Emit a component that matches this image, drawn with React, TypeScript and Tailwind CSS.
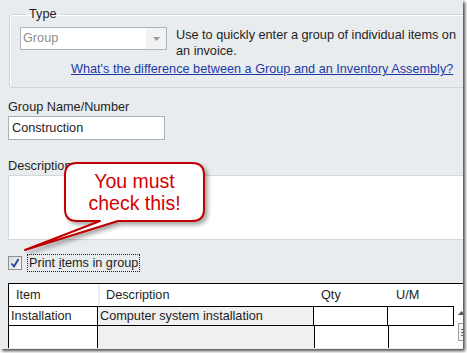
import React from "react";

const ui = "font-['Liberation_Sans',Arial,sans-serif] text-[12.7px] text-[#1e1e1e]";

function Callout() {
  return (
    <div className="absolute left-[20px] top-[158px] h-[100px] w-[200px]">
      <svg
        width="200"
        height="100"
        viewBox="20 158 200 100"
        className="drop-shadow-[3px_3px_2px_rgba(0,0,0,0.35)]"
      >
        <path
          d="M77 163 H192 Q204 163 204 175 V209 Q204 221 192 221 H118 L25 250 L100 221 H77 Q65 221 65 209 V175 Q65 163 77 163 Z"
          fill="#ffffff"
          stroke="#c00000"
          strokeWidth="2"
          strokeLinejoin="round"
        />
      </svg>
      <div className="absolute left-[45px] top-[12px] w-[139px] text-center font-['Liberation_Sans',Arial,sans-serif] text-[19.5px] leading-[22px] text-[#d40000]">
        You must
        <br />
        check this!
      </div>
    </div>
  );
}

export default function App() {
  return (
    <div className="h-[353px] w-[467px] bg-white">
      <div
        className={`relative h-[349px] w-[463px] overflow-hidden bg-[#e8ecee] shadow-[2px_2px_3px_#4a4a4a] ${ui}`}
      >
        <fieldset className="ml-[9px] mt-[8px] w-[470px] rounded-[3px] border border-[#cfd5d9] pb-[10px] pl-[10px] pt-[7px] shadow-[inset_1px_1px_0_#ffffff]">
          <legend className="ml-[6px] px-[3px] leading-[12px]">Type</legend>
          <div className="flex items-start">
            <div className="flex h-[23px] w-[147px] items-stretch border border-[#aab4be] bg-white">
              <span className="flex-1 pl-[2px] leading-[21px] text-[#8d8d8d]">Group</span>
              <span className="flex w-[20px] items-center justify-center bg-[#f2f2f2]">
                <svg width="7" height="4" viewBox="0 0 7 4">
                  <path d="M0 0 H7 L3.5 4 Z" fill="#9a9a9a" />
                </svg>
              </span>
            </div>
            <div className="ml-[9px] leading-[16px]">
              <div>Use to quickly enter a group of individual items on</div>
              <div>an invoice.</div>
            </div>
          </div>
          <div className="ml-[51px] mt-[2px] leading-[16px] text-[#1c3aa6] underline">
            What&apos;s the difference between a Group and an Inventory Assembly?
          </div>
        </fieldset>

        <div className="ml-[8px] mt-[11px] leading-[16px]">Group Name/Number</div>
        <div className="ml-[8px] mt-[1px] h-[24px] w-[157px] border border-[#a9b0b6] bg-white pl-[3px] leading-[22px]">
          Construction
        </div>

        <div className="ml-[8px] mt-[18px] leading-[16px]">Description</div>
        <div className="ml-[8px] mt-[1px] h-[65px] w-[470px] border border-[#d3d8dc] bg-white" />

        <div className="ml-[8px] mt-[14px] flex h-[18px] items-center">
          <span className="flex h-[14px] w-[14px] items-center justify-center border border-[#8e8f8f] bg-gradient-to-br from-[#dcdcdc] to-[#f7f7f7]">
            <svg width="10" height="10" viewBox="0 0 10 10">
              <path d="M1.5 5.5 L4 8.5 L8.5 1" fill="none" stroke="#2a3f94" strokeWidth="1.8" />
            </svg>
          </span>
          <span className="ml-[5px] border border-dotted border-[#202020] px-[1px] leading-[16px]">
            Print <span className="underline">i</span>tems in group
          </span>
        </div>

        <div className="ml-[8px] mt-[11px] w-[470px] border-l border-t border-black bg-white">
          <div className="grid h-[22px] grid-cols-[89px_216px_74px_66px_1fr] items-center leading-[20px]">
            <div className="pl-[7px]">Item</div>
            <div className="border-l-2 border-[#eeeeee] pl-[6px]">Description</div>
            <div className="pl-[7px]">Qty</div>
            <div className="pl-[8px]">U/M</div>
            <div />
          </div>
          <div className="grid grid-cols-[89px_216px_74px_66px_1fr]">
            <div className="col-span-4 grid h-[20px] grid-cols-[88px_216px_74px_65px] border-b border-r border-t border-black leading-[18px]">
              <div className="pl-[2px]">Installation</div>
              <div className="border-l border-black bg-[#f0f0f0] pl-[2px]">Computer system installation</div>
              <div className="border-l border-black" />
              <div className="border-l border-black" />
            </div>
            <div className="row-span-2 flex flex-col items-start pl-[4px]">
              <svg className="mt-[5px]" width="7" height="4" viewBox="0 0 7 4">
                <path d="M0 4 H7 L3.5 0 Z" fill="#555555" />
              </svg>
              <span className="mt-[8px] flex h-[18px] w-[10px] flex-col justify-center gap-[2px] border border-[#9aa0a6] bg-[#f4f4f4] px-[2px]">
                <span className="h-px bg-[#666]" />
                <span className="h-px bg-[#666]" />
                <span className="h-px bg-[#666]" />
              </span>
            </div>
            <div className="col-span-4 grid h-[22px] grid-cols-[88px_217px_74px_65px]">
              <div />
              <div className="border-l border-black bg-[#f0f0f0]" />
              <div className="border-l border-black" />
              <div className="border-l border-black" />
            </div>
          </div>
        </div>

        <Callout />
      </div>
    </div>
  );
}
